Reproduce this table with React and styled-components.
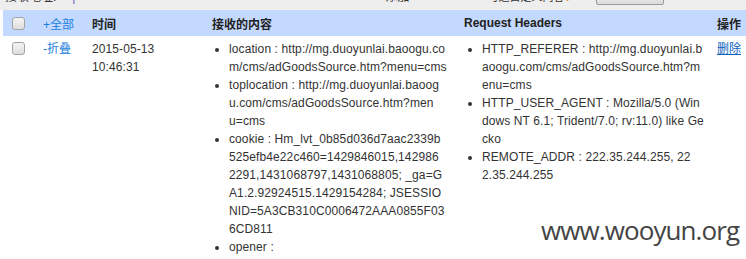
import React from "react";
import styled, { createGlobalStyle } from "styled-components";

const Global = createGlobalStyle`
  html, body { margin: 0; padding: 0; background: #fff; }
  body { font-family: "Liberation Sans", Arial, "Noto Sans CJK SC", sans-serif; font-size: 12px; color: #333; }
`;

const Page = styled.div`
  position: relative;
  width: 746px;
  height: 259px;
  overflow: hidden;
  background: #fff;
`;

const Toolbar = styled.div`
  display: flex;
  align-items: flex-end;
  height: 10px;
  overflow: hidden;
  background: #eeeeee;
  padding-left: 5px;
`;

const ToolText = styled.span`
  flex: none;
  line-height: 14px;
  margin-bottom: 6px;
  margin-left: ${(p) => p.$ml || 0}px;
  font-size: ${(p) => p.$fs || 12}px;
  color: ${(p) => p.$color || "#333"};
  white-space: nowrap;
`;

const ToolButton = styled.span`
  flex: none;
  margin-left: ${(p) => p.$ml || 0}px;
  margin-bottom: 5px;
  height: 20px;
  width: 68px;
  box-sizing: border-box;
  border: 1px solid #9a9a9a;
  border-radius: 2px;
  background: linear-gradient(#f6f6f6, #dddddd);
`;

const Grid = styled.div`
  margin-left: 3px;
  display: grid;
  grid-template-columns: 36px 49px 120px 252px 253px 33px;
`;

const HeadCell = styled.div`
  background: #c4d9ff;
  height: 26px;
  display: flex;
  align-items: center;
  padding-left: ${(p) => (p.$pl !== undefined ? p.$pl : 4)}px;
  font-weight: bold;
  color: #222;
  white-space: nowrap;
`;

const Cell = styled.div`
  padding: 4px 0 0 ${(p) => (p.$pl !== undefined ? p.$pl : 4)}px;
  line-height: 18px;
  color: #333;
  letter-spacing: 0.1px;
`;

const Check = styled.span`
  display: block;
  width: 13px;
  height: 13px;
  box-sizing: border-box;
  border: 1px solid #a3a3a3;
  border-radius: 3px;
  background: linear-gradient(#f4f4f4, #dedede);
  margin-top: ${(p) => p.$mt || 0}px;
`;

const Link = styled.span`
  color: ${(p) => (p.$dark ? "#0b5fbf" : "#1a80e0")};
  font-weight: normal;
  letter-spacing: 0;
  text-decoration: ${(p) => (p.$u ? "underline" : "none")};
`;

const TimeText = styled.div`
  width: 76px;
`;

const List = styled.ul`
  margin: 0;
  padding: 0 0 0 ${(p) => p.$pl}px;
  width: ${(p) => p.$w}px;
  word-break: break-all;
  list-style: disc;
  li { line-height: 18px; white-space: nowrap; }
`;

const Watermark = styled.div`
  position: absolute;
  left: 541px;
  top: 212px;
  font-family: "Open Sans", "Noto Sans", sans-serif;
  font-size: 26px;
  line-height: 36px;
  color: #444;
  letter-spacing: -0.9px;
  white-space: nowrap;
`;

const received = [
  ["location : http://mg.duoyunlai.baoogu.co", "m/cms/adGoodsSource.htm?menu=cms"],
  ["toplocation : http://mg.duoyunlai.baoog", "u.com/cms/adGoodsSource.htm?men", "u=cms"],
  [
    "cookie : Hm_lvt_0b85d036d7aac2339b",
    "525efb4e22c460=1429846015,142986",
    "2291,1431068797,1431068805; _ga=G",
    "A1.2.92924515.1429154284; JSESSIO",
    "NID=5A3CB310C0006472AAA0855F03",
    "6CD811",
  ],
  ["opener : "],
];

const headers = [
  ["HTTP_REFERER : http://mg.duoyunlai.b", "aoogu.com/cms/adGoodsSource.htm?m", "enu=cms"],
  ["HTTP_USER_AGENT : Mozilla/5.0 (Win", "dows NT 6.1; Trident/7.0; rv:11.0) like Ge", "cko"],
  ["REMOTE_ADDR : 222.35.244.255, 22", "2.35.244.255"],
];

function Item({ lines }) {
  return (
    <li>
      {lines.map((l, i) => (
        <React.Fragment key={i}>
          {i > 0 && <br />}
          {l}
        </React.Fragment>
      ))}
    </li>
  );
}

export default function App() {
  return (
    <Page>
      <Global />
      <Toolbar>
        <ToolText>接收地址:</ToolText>
        <ToolText $ml={16} $color="#6a4fc0">|</ToolText>
        <ToolText $ml={310}>添加</ToolText>
        <ToolText $ml={78} $fs={11}>可选自定义内容</ToolText>
        <ToolText $color="#e07a10">?</ToolText>
        <ToolButton $ml={25} />
      </Toolbar>
      <Grid>
        <HeadCell $pl={9}><Check /></HeadCell>
        <HeadCell><Link>+全部</Link></HeadCell>
        <HeadCell>时间</HeadCell>
        <HeadCell>接收的内容</HeadCell>
        <HeadCell>Request Headers</HeadCell>
        <HeadCell>操作</HeadCell>

        <Cell $pl={9}><Check $mt={2} /></Cell>
        <Cell><Link>-折叠</Link></Cell>
        <Cell><TimeText>2015-05-13 10:46:31</TimeText></Cell>
        <Cell>
          <List $pl={17} $w={225}>
            {received.map((lines, i) => <Item key={i} lines={lines} />)}
          </List>
        </Cell>
        <Cell>
          <List $pl={18} $w={228}>
            {headers.map((lines, i) => <Item key={i} lines={lines} />)}
          </List>
        </Cell>
        <Cell><Link $u $dark>删除</Link></Cell>
      </Grid>
      <Watermark>www.wooyun.org</Watermark>
    </Page>
  );
}
